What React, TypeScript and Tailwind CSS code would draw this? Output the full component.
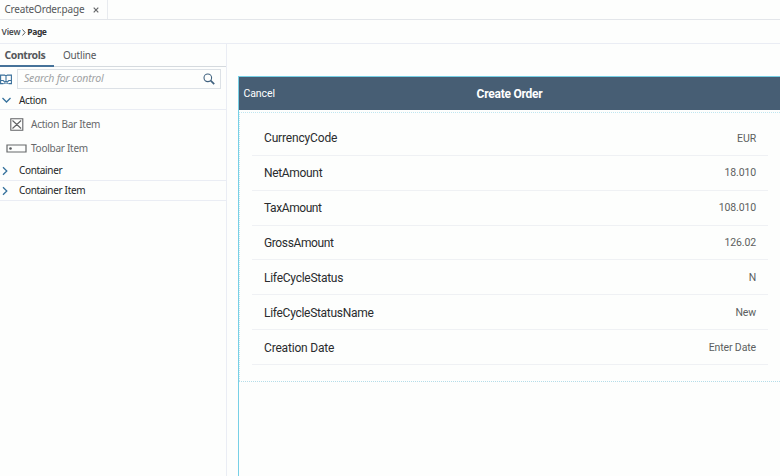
const rows = [
  { label: 'CurrencyCode', value: 'EUR', tracking: 'tracking-[-0.16px]' },
  { label: 'NetAmount', value: '18.010', tracking: 'tracking-[-0.33px]' },
  { label: 'TaxAmount', value: '108.010', tracking: 'tracking-[-0.42px]' },
  { label: 'GrossAmount', value: '126.02', tracking: 'tracking-[-0.38px]' },
  { label: 'LifeCycleStatus', value: 'N', tracking: 'tracking-[-0.26px]' },
  { label: 'LifeCycleStatusName', value: 'New', tracking: 'tracking-[-0.29px]' },
  { label: 'Creation Date', value: 'Enter Date', tracking: 'tracking-[-0.18px]' },
];

function Chevron({ open = false }: { open?: boolean }) {
  return (
    <svg className="h-[10px] w-[13px] shrink-0" viewBox="0 0 13 10" fill="none" stroke="#35719c" strokeWidth="1.3">
      {open ? <path d="M2.5 3 6.5 7 10.5 3" /> : <path d="M3 1.2 6.8 5 3 8.8" />}
    </svg>
  );
}

function Group({ title, open = false }: { title: string; open?: boolean }) {
  return (
    <div className="flex h-5 items-center gap-[6px] border-b border-[#eaedf4] text-[10px] tracking-[-0.33px] text-[#242628]">
      <Chevron open={open} />
      <span className={open ? 'pt-[2px]' : ''}>{title}</span>
    </div>
  );
}

function Sidebar() {
  return (
    <aside className="flex w-[227px] shrink-0 flex-col border-r border-[#eaedf4]">
      <div className="flex h-[23px] border-b border-[#d5dade] leading-[22px] text-[#55585b]">
        <div className="h-[23px] w-[54px] border-b-2 border-[#457299] pl-[4.5px] text-[10.5px] font-bold tracking-[-0.42px]">Controls</div>
        <div className="pl-[9px] text-[10px] tracking-[-0.2px]">Outline</div>
      </div>
      <div className="flex h-6 items-center">
        <svg className="mr-[5px] h-[11px] w-3 shrink-0" viewBox="0 0 12 11" fill="none" stroke="#3a709b" strokeWidth="1.1">
          <path d="M.6 9.6V1.1h4L6 2l1.4-.9h4v8.5M0 9.6h3.5M8.5 9.6H12M6 2v4M.6 6.5h2.6M8.8 6.5h2.6M3.2 6.5 6 9.3l2.8-2.8M4 9.8l2-3 2 3" />
        </svg>
        <div className="flex h-5 w-[204px] items-center justify-between border border-[#dce1e6] pl-[6px] pr-[5px]">
          <span className="text-[10.5px] italic tracking-[-0.2px] text-[#a0a2a4]">Search for control</span>
          <svg className="h-3 w-3" viewBox="0 0 12 12" fill="none" stroke="#40627f">
            <circle cx="4.8" cy="4.8" r="3.8" strokeWidth="1.1" />
            <path d="m7.7 7.7 3.5 3.5" strokeWidth="1.7" />
          </svg>
        </div>
      </div>
      <div className="-mt-px">
        <Group title="Action" open />
      </div>
      <div className="flex h-[51px] flex-col pt-[2px] text-[10px] tracking-[-0.26px] text-[#66686a]">
        <div className="flex h-6 items-center pl-[10px]">
          <svg className="mr-[7.5px] mt-px h-[13px] w-[13.5px]" viewBox="0 0 13.5 13" fill="none" stroke="#606264" strokeWidth="1.1">
            <path d="M.8.8h12v11.5H.8zM2.5 2.5l8.6 8M11.1 2.5l-8.6 8" />
          </svg>
          <span>Action Bar Item</span>
        </div>
        <div className="flex h-6 items-center pl-[6px]">
          <svg className="mr-1 mt-px h-[9px] w-[21px]" viewBox="0 0 21 9" fill="none" stroke="#66686a">
            <path d="M1 1h19v7H1z" strokeWidth="1.2" />
            <circle cx="4.5" cy="4.5" r="1.3" fill="#55585b" stroke="none" />
          </svg>
          <span>Toolbar Item</span>
        </div>
      </div>
      <Group title="Container" />
      <Group title="Container Item" />
    </aside>
  );
}

function PagePreview() {
  return (
    <section className="ml-[11px] mt-8 flex min-w-0 flex-1 flex-col border-l border-t border-[#77d0e6]">
      <header className="grid h-[33px] grid-cols-3 items-center bg-[#475e74] text-white">
        <span className="pl-[4.5px] font-[Roboto] text-[10.5px] tracking-[-0.1px]">Cancel</span>
        <span className="text-center font-[Roboto] text-[12px] font-bold tracking-[-0.25px]">Create Order</span>
      </header>
      <div className="h-[272px] border-b border-dotted border-[#b5dde9] pt-[2px]">
        <div className="h-full border-l border-t border-dotted border-[#c0e6f0] pl-3 pr-3 pt-[8px]">
          {rows.map((row) => (
            <div key={row.label} className="flex h-[34.86px] items-center justify-between border-b border-[#eff1f4] pl-3 pr-3 font-[Roboto]">
              <span className={`pt-px text-[12px] text-[#2a2c2e] ${row.tracking}`}>{row.label}</span>
              <span className="pt-px text-[10.5px] tracking-[-0.12px] text-[#5c5e60]">{row.value}</span>
            </div>
          ))}
        </div>
      </div>
    </section>
  );
}

export default function App() {
  return (
    <div className="flex h-[476px] w-[780px] flex-col overflow-hidden whitespace-nowrap bg-[#fdfefd] font-['Noto_Sans',sans-serif]">
      <div className="flex h-5 shrink-0 border-b border-[#e3e6ea]">
        <div className="flex w-[108px] items-center border-r border-[#e8ebef] pl-[4.5px] text-[10px] tracking-[-0.2px] text-[#55585b]">
          <span>CreateOrder.page</span>
          <svg className="ml-[9px] mt-px h-[6px] w-[6px]" viewBox="0 0 6 6" stroke="#66686a" strokeWidth="1.2">
            <path d="m.7.7 4.6 4.6M5.3.7.7 5.3" />
          </svg>
        </div>
      </div>
      <nav className="flex h-6 shrink-0 items-center border-b border-[#eaedf4] pl-[1.5px] pt-px text-[8.5px] text-[#4a4d50]">
        <span className="font-semibold tracking-[-0.2px]">View</span>
        <svg className="ml-[2px] mr-px h-[7px] w-1" viewBox="0 0 4 7" fill="none" stroke="#55585b">
          <path d="m.5.5 2.6 3-2.6 3" />
        </svg>
        <span className="font-bold tracking-[-0.4px] text-[#303234]">Page</span>
      </nav>
      <div className="flex min-h-0 flex-1">
        <Sidebar />
        <PagePreview />
      </div>
    </div>
  );
}
